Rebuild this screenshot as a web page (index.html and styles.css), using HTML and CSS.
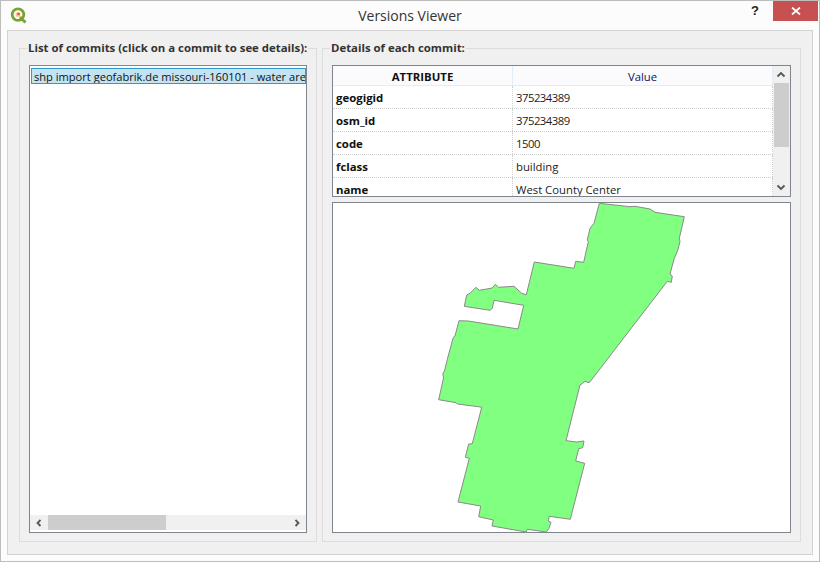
FILE: index.html
```html
<!DOCTYPE html>
<html lang="en">
<head>
<meta charset="utf-8">
<title>Versions Viewer</title>
<link rel="stylesheet" href="styles.css">
</head>
<body>
<div class="window">
  <header class="titlebar">
    <svg class="logo" width="18" height="18" viewBox="0 0 18 18">
      <circle cx="8" cy="7.600" r="5.800" fill="#fff" stroke="#76a52e" stroke-width="2.800"/>
      <path d="M10 10l5.500 5.500" stroke="#76a52e" stroke-width="3" fill="none"/>
      <circle cx="8" cy="7.600" r="2.500" fill="#f5c49c"/>
      <circle cx="8.500" cy="7" r="1.300" fill="#e2562a"/>
    </svg>
    <div class="title">Versions Viewer</div>
    <div class="help">?</div>
    <div class="close">
      <svg width="10" height="8" viewBox="0 0 10 8"><path d="M1 0.500l8 7M9 0.500l-8 7" stroke="#fff" stroke-width="1.800" fill="none"/></svg>
    </div>
  </header>
  <main class="client">
    <fieldset class="group group-left">
      <legend>List of commits (click on a commit to see details):</legend>
      <div class="list">
        <div class="list-body">
          <div class="commit">shp import geofabrik.de missouri-160101 - water areas</div>
        </div>
        <div class="hscroll">
          <svg class="arrow" width="8" height="8" viewBox="0 0 8 8"><path d="M5.500 1L2.500 4l3 3" stroke="#555" stroke-width="1.800" fill="none"/></svg>
          <div class="hthumb"></div>
          <div class="spacer"></div>
          <svg class="arrow" width="8" height="8" viewBox="0 0 8 8"><path d="M2.500 1l3 3-3 3" stroke="#555" stroke-width="1.800" fill="none"/></svg>
        </div>
      </div>
    </fieldset>
    <fieldset class="group group-right">
      <legend>Details of each commit:</legend>
      <div class="attrs">
        <div class="attrs-table">
          <div class="row head"><div class="cell key">ATTRIBUTE</div><div class="cell val">Value</div></div>
          <div class="row"><div class="cell key">geogigid</div><div class="cell val num">375234389</div></div>
          <div class="row"><div class="cell key">osm_id</div><div class="cell val num">375234389</div></div>
          <div class="row"><div class="cell key">code</div><div class="cell val num">1500</div></div>
          <div class="row"><div class="cell key">fclass</div><div class="cell val">building</div></div>
          <div class="row"><div class="cell key">name</div><div class="cell val">West County Center</div></div>
        </div>
        <div class="vscroll">
          <svg class="arrow" width="10" height="8" viewBox="0 0 10 8"><path d="M1.500 6L5 2.500 8.500 6" stroke="#555" stroke-width="1.800" fill="none"/></svg>
          <div class="vthumb"></div>
          <div class="spacer"></div>
          <svg class="arrow" width="10" height="8" viewBox="0 0 10 8"><path d="M1.500 2L5 5.500 8.500 2" stroke="#555" stroke-width="1.800" fill="none"/></svg>
        </div>
      </div>
      <div class="map">
        <svg width="457" height="329" viewBox="333 203 457 329">
          <polygon fill="#80ff80" stroke="#8a8a8a" stroke-width="1" stroke-linejoin="round" points="599.300,203.300 630,206.700 635,206.300 650,209 655,212.300 684.300,216.700 679.300,238.300 680,241.700 677.300,251.700 674.300,258.300 670,274 672.300,276 671.300,282.300 667.300,281.300 589.300,382.700 585,381.300 581.700,384 580,385 566,440.700 576.700,442 584,441 582.700,447.700 578.700,448.700 575.700,461 584.700,463.300 570.300,519.300 549.300,516.300 548.300,521 551,522.300 549,528.300 546.300,532 527.300,529.300 526.300,532 492,526 493.300,520 478.700,516.700 480.700,506 458,502 469.300,458.300 465.300,457.300 468.700,444 472.300,443.700 481.700,407.300 478.300,406.700 457.300,404 456,402.700 438.700,399.700 443.500,378 442.800,373.500 444.500,371 447.300,359.300 453.300,337.300 455,336 459,320.700 468.300,321 518,329 523.700,305.300 494,300.300 492.300,308.300 490,310.300 464.300,306.300 466.700,295 470,293.300 476,287.300 479.300,290.300 492.300,288 495.300,284.300 498.700,287.300 514,286.300 521.700,293.300 526.300,294.700 534.300,262 574,268.300 575.700,261.300 583.700,262.300 588.300,241.700 587.300,240 590,228.300 594,223.300"/>
        </svg>
      </div>
    </fieldset>
  </main>
</div>
</body>
</html>
```
FILE: styles.css
```css
* { box-sizing: border-box; }
html, body { margin: 0; height: 100%; }
body {
  width: 820px;
  height: 562px;
  overflow: hidden;
  background: #fcfcfc;
  font-family: "Open Sans", "Liberation Sans", sans-serif;
  font-size: 11.300px;
  color: #111;
}
.window {
  width: 820px;
  height: 562px;
  display: flex;
  flex-direction: column;
  border: 1px solid #bdbdbd;
  padding: 0 6px 6px;
  background: #fcfcfc;
}
.titlebar {
  height: 29px;
  display: flex;
  align-items: flex-start;
  flex: none;
  position: relative;
  margin: 0 -5px;
}
.logo { position: absolute; left: 8px; top: 6px; }
.title {
  flex: 1;
  text-align: center;
  font-size: 14px;
  line-height: 29px;
  color: #333;
}
.help {
  position: absolute;
  right: 59px;
  top: 2px;
  font: bold 13px/16px "Liberation Sans", sans-serif;
  color: #222;
}
.close {
  position: absolute;
  right: 0;
  top: 0;
  width: 45px;
  height: 20px;
  background: #c75050;
  display: flex;
  align-items: center;
  justify-content: center;
}
.client {
  flex: 1;
  display: flex;
  gap: 5px;
  padding: 9px 11px 12px;
  background: #f0f0f0;
  border: 1px solid #d2d2d2;
  min-height: 0;
}
.group {
  margin: 0;
  min-width: 0;
  padding: 9px 9px 8px 9px;
  border: 1px solid #dcdcdc;
  display: flex;
  flex-direction: column;
}
.group legend {
  padding: 0 1px;
  margin-left: -2px;
  font-weight: 700;
  font-size: 11.400px;
  line-height: 16px;
  color: #333;
  white-space: nowrap;
}
.group-left { width: 298px; }
.group-right { flex: 1; gap: 5px; }
.list, .attrs, .map { border: 1px solid #80868e; background: #fff; }
.list {
  flex: 1;
  display: flex;
  flex-direction: column;
  padding: 0 0 2px;
  min-height: 0;
}
.list-body { flex: 1; padding: 2px 0 0 1px; overflow: hidden; }
.commit {
  height: 16px;
  line-height: 15px;
  font-size: 11.100px;
  border: 1px solid #3399cc;
  background: #c1e3f2;
  white-space: nowrap;
  overflow: hidden;
  padding-left: 2px;
  color: #111;
}
.hscroll {
  height: 15px;
  flex: none;
  display: flex;
  align-items: center;
  background: #f0f0f0;
}
.hscroll .arrow { flex: none; width: 18px; }
.hthumb { width: 118px; height: 15px; background: #cdcdcd; }
.spacer { flex: 1; }
.attrs {
  height: 132px;
  flex: none;
  display: flex;
  overflow: hidden;
}
.attrs-table { flex: 1; min-width: 0; overflow: hidden; }
.row {
  display: grid;
  grid-template-columns: 180px 1fr;
  height: 23px;
  border-bottom: 1px dotted #cfcfcf;
}
.row.head {
  height: 20px;
  background: #fbfbfd;
  border-bottom: 1px solid #e3edf8;
}
.cell {
  line-height: 24px;
  padding-left: 3px;
  white-space: nowrap;
  border-right: 1px dotted #cfcfcf;
  color: #222;
}
.num { letter-spacing: -0.500px; }
.cell.key {
  font-size: 11.400px;
  font-weight: 700;
  color: #111;
}
.head .cell { line-height: 22px; text-align: center; padding: 0; border-right: 1px solid #e3edf8; }
.head .val { color: #10105a; }
.vscroll {
  width: 17px;
  flex: none;
  display: flex;
  flex-direction: column;
  align-items: center;
  background: #f0f0f0;
  padding: 0 1px 0 0;
}
.vscroll .arrow { flex: none; height: 17px; }
.vthumb { width: 15px; height: 64px; background: #cdcdcd; }
.map {
  flex: 1;
  min-height: 0;
  overflow: hidden;
}
.map svg { display: block; }
```
